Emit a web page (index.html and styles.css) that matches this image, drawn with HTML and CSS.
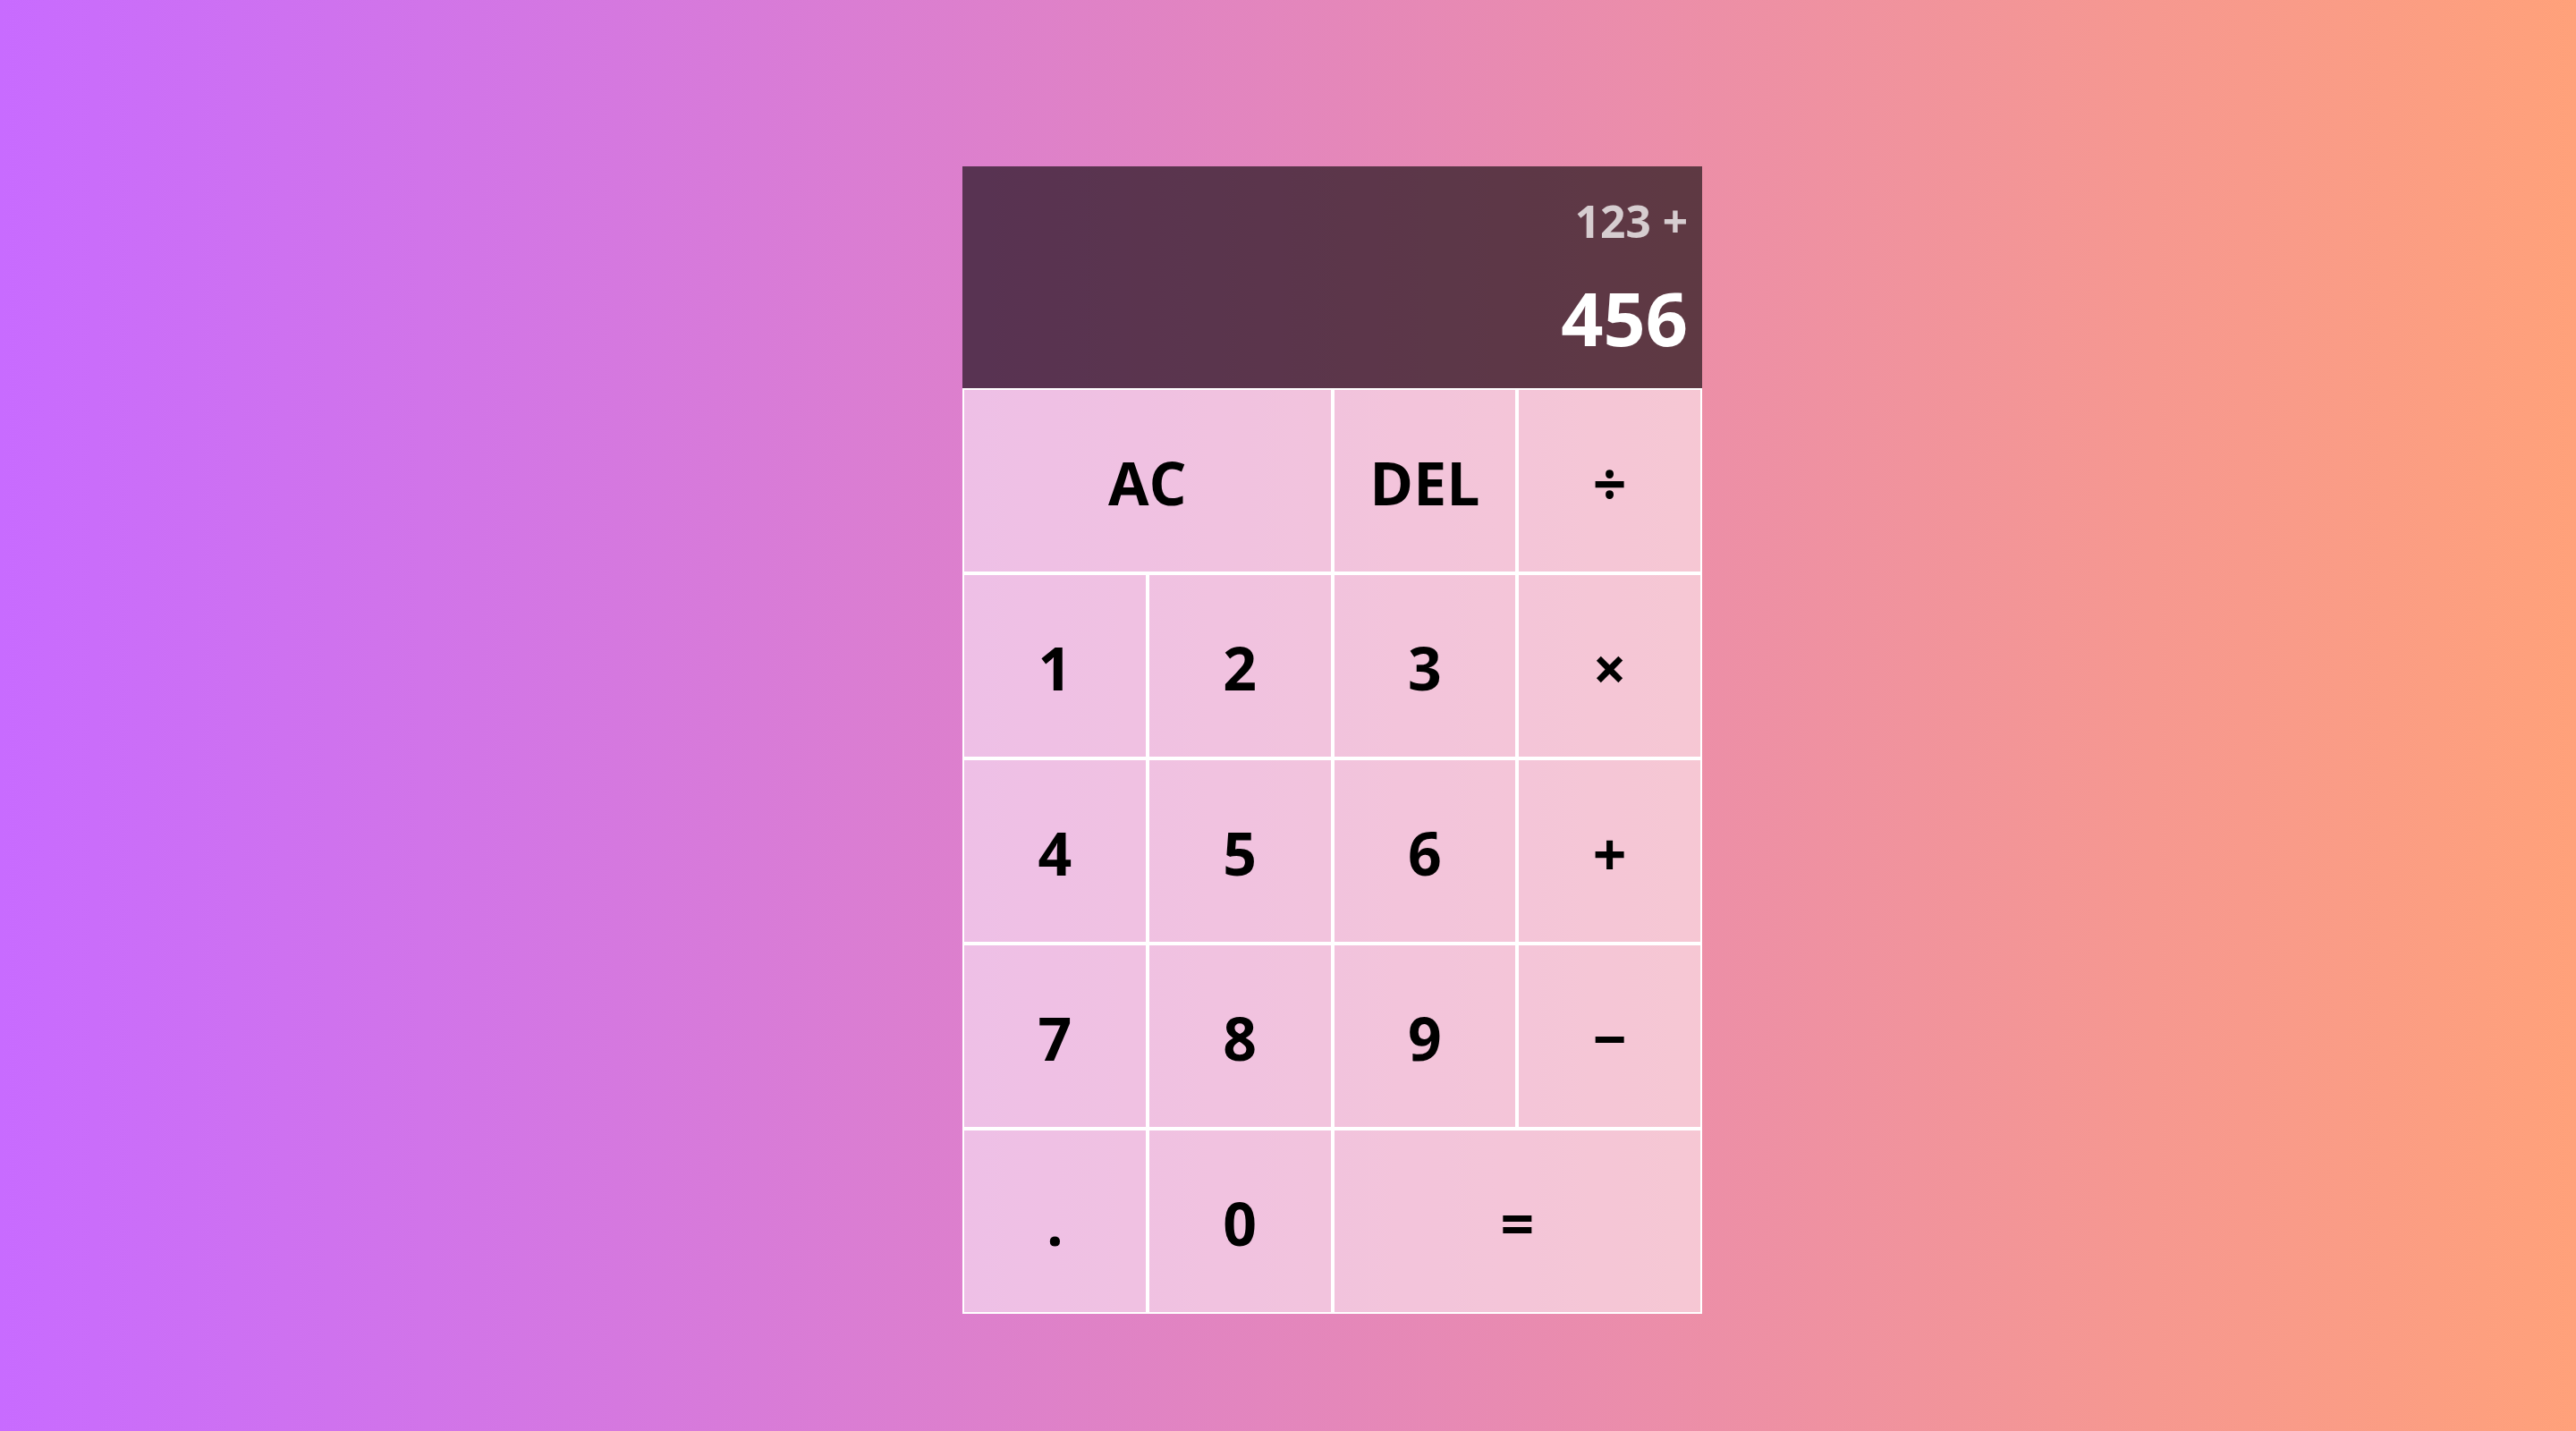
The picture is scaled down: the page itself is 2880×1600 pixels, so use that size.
FILE: index.html
```html
<!DOCTYPE html>
<html lang="en">
<head>
<meta charset="utf-8">
<title>Calculator</title>
<link rel="stylesheet" href="styles.css">
</head>
<body>
<main class="page">
  <div class="calculator">
    <div class="output">
      <div class="previous">123 +</div>
      <div class="current">456</div>
    </div>
    <button class="key span-two">AC</button>
    <button class="key">DEL</button>
    <button class="key">÷</button>
    <button class="key">1</button>
    <button class="key">2</button>
    <button class="key">3</button>
    <button class="key">×</button>
    <button class="key">4</button>
    <button class="key">5</button>
    <button class="key">6</button>
    <button class="key">+</button>
    <button class="key">7</button>
    <button class="key">8</button>
    <button class="key">9</button>
    <button class="key">−</button>
    <button class="key">.</button>
    <button class="key">0</button>
    <button class="key span-two">=</button>
  </div>
</main>
</body>
</html>
```

FILE: styles.css
```css
* { box-sizing: border-box; }

html, body {
  margin: 0;
  padding: 0;
}

body {
  min-height: 100vh;
  background: linear-gradient(to right, #c86bff, #ffa17a);
  font-family: "Open Sans", "Noto Sans", sans-serif;
}

.page {
  min-height: 100vh;
  display: flex;
  justify-content: center;
  align-items: flex-start;
  padding: 186px 0 0 99px;
}

.calculator {
  display: grid;
  grid-template-columns: repeat(4, 206.75px);
  grid-template-rows: 248px repeat(5, 207px);
}

.output {
  grid-column: 1 / -1;
  background: rgba(0, 0, 0, 0.6);
  display: flex;
  flex-direction: column;
  align-items: flex-end;
  justify-content: space-around;
  padding: 18px 16px 14px 16px;
  word-wrap: break-word;
  word-break: break-all;
}

.previous {
  color: rgba(255, 255, 255, 0.75);
  font-size: 49.6px;
  font-weight: 700;
  line-height: 1.2;
}

.current {
  color: #fff;
  font-size: 82.7px;
  font-weight: 700;
  line-height: 1.2;
}

.key {
  font-family: "Open Sans", "Noto Sans", sans-serif;
  font-weight: 700;
  font-size: 66px;
  color: #000;
  border: 2px solid #fff;
  outline: none;
  background: rgba(255, 255, 255, 0.5);
  margin: 0;
  padding: 2px 0 0 0;
  cursor: pointer;
}

.span-two {
  grid-column: span 2;
}
```
